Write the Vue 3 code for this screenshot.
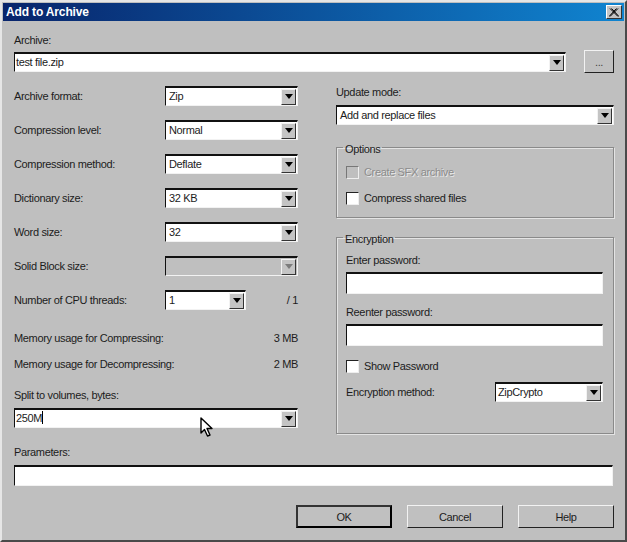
<script setup>
const rows = [
  { label: 'Archive format:', value: 'Zip' },
  { label: 'Compression level:', value: 'Normal' },
  { label: 'Compression method:', value: 'Deflate' },
  { label: 'Dictionary size:', value: '32 KB' },
  { label: 'Word size:', value: '32' },
  { label: 'Solid Block size:', value: '', disabled: true }
]
</script>

<template>
  <div class="window">
    <div class="titlebar">
      <span>Add to Archive</span>
      <button class="close">
        <svg width="10" height="9" viewBox="0 0 10 9"><path d="M1 0.5 L9 8.5 M2.5 0.5 L10 8.5 M9 0.5 L1 8.5 M7.5 0.5 L0 8.5" stroke="#000" fill="none" /></svg>
      </button>
    </div>

    <div class="body">
      <div class="label">Archive:</div>
      <div class="archive-row">
        <div class="combo edit">
          <span class="text">test file.zip</span>
          <span class="drop"><i></i></span>
        </div>
        <button class="btn browse">...</button>
      </div>

      <div class="columns">
        <div class="left">
          <div class="rows">
            <div v-for="row in rows" :key="row.label" class="row">
              <span class="row-label">{{ row.label }}</span>
              <div class="combo wide" :class="{ disabled: row.disabled }">
                <span class="text">{{ row.value }}</span>
                <span class="drop"><i></i></span>
              </div>
            </div>
            <div class="row">
              <span class="row-label">Number of CPU threads:</span>
              <div class="combo cpu">
                <span class="text">1</span>
                <span class="drop"><i></i></span>
              </div>
              <span class="aside">/ 1</span>
            </div>
          </div>

          <div class="mem first"><span>Memory usage for Compressing:</span><span>3 MB</span></div>
          <div class="mem"><span>Memory usage for Decompressing:</span><span>2 MB</span></div>

          <div class="label split-label">Split to volumes, bytes:</div>
          <div class="combo edit split">
            <span class="text">250M<b class="caret"></b></span>
            <span class="drop"><i></i></span>
          </div>
        </div>

        <div class="right">
          <div class="label">Update mode:</div>
          <div class="combo update">
            <span class="text">Add and replace files</span>
            <span class="drop"><i></i></span>
          </div>

          <fieldset class="group options">
            <legend>Options</legend>
            <div class="check off"><span class="box"></span><span>Create SFX archive</span></div>
            <div class="check"><span class="box"></span><span>Compress shared files</span></div>
          </fieldset>

          <fieldset class="group encryption">
            <legend>Encryption</legend>
            <div class="label">Enter password:</div>
            <div class="input"></div>
            <div class="label second">Reenter password:</div>
            <div class="input"></div>
            <div class="check show"><span class="box"></span><span>Show Password</span></div>
            <div class="method">
              <span>Encryption method:</span>
              <div class="combo method-combo">
                <span class="text">ZipCrypto</span>
                <span class="drop"><i></i></span>
              </div>
            </div>
          </fieldset>
        </div>
      </div>

      <div class="label params-label">Parameters:</div>
      <div class="input params"></div>

      <div class="actions">
        <button class="btn default">OK</button>
        <button class="btn">Cancel</button>
        <button class="btn">Help</button>
      </div>
    </div>

    <svg class="cursor" width="15" height="21" viewBox="0 0 15 21">
      <path d="M1 1 L1 16 L4.5 12.5 L7.5 19 L10 18 L7 11.5 L12 11.5 Z" fill="#fff" stroke="#000" stroke-width="1.4" stroke-linejoin="round" />
    </svg>
  </div>
</template>

<style scoped>
.window {
  position: relative;
  width: 627px;
  height: 542px;
  box-sizing: border-box;
  border: 2px solid;
  border-color: #e6e6e6 #4a4a4a #4a4a4a #e6e6e6;
  padding: 1px;
  background: #bfbfbf;
  color: #1c1c1c;
  font: 11px/14px "Liberation Sans", Arial, sans-serif;
  letter-spacing: -0.35px;
  overflow: hidden;
}
.titlebar {
  display: flex;
  align-items: center;
  justify-content: space-between;
  height: 18px;
  padding: 0 2px 0 3px;
  background: linear-gradient(90deg, #08246b, #1084d0);
  color: #fff;
  font-weight: bold;
  font-size: 12px;
  letter-spacing: -0.15px;
}
.close {
  display: flex;
  align-items: center;
  justify-content: center;
  width: 16px;
  height: 14px;
  padding: 0;
  border: 1px solid;
  border-color: #fff #333 #333 #fff;
  background: #c4c4c4;
}
.body { padding: 12px 10px 0 11px; }
.archive-row {
  display: flex;
  align-items: flex-end;
  justify-content: space-between;
  margin-top: 3px;
}
.combo {
  display: flex;
  align-items: center;
  justify-content: space-between;
  box-sizing: border-box;
  height: 20px;
  padding: 0 1px 0 3px;
  background: #fff;
  border: 1px solid;
  border-color: #111 #f2f2f2 #f2f2f2 #111;
  border-top-width: 2px;
  color: #1c1c1c;
}
.combo .text { padding-bottom: 1px; }
.combo.edit { width: 552px; padding-left: 1px; }
.combo.wide { width: 133px; }
.combo.cpu { width: 81px; }
.combo.split { width: 284px; height: 20px; }
.combo.update { width: 278px; margin-top: 6px; }
.combo.method-combo { width: 108px; padding-left: 2px; }
.combo.disabled { background: #bfbfbf; }
.drop {
  display: flex;
  align-items: center;
  justify-content: center;
  box-sizing: border-box;
  width: 15px;
  height: 16px;
  border: 1px solid;
  border-color: #f2f2f2 #333 #333 #f2f2f2;
  background: #c4c4c4;
}
.drop i {
  width: 0;
  height: 0;
  border: 4px solid transparent;
  border-top: 5px solid #000;
  border-bottom: 0;
}
.disabled .drop i { border-top-color: #7c7c7c; }
.btn {
  box-sizing: border-box;
  width: 96px;
  height: 23px;
  padding: 0;
  border: 1px solid;
  border-color: #f2f2f2 #222 #222 #f2f2f2;
  background: #c0c0c0;
  color: #1c1c1c;
  font: inherit;
  letter-spacing: inherit;
}
.btn.browse { width: 30px; margin-bottom: -1px; color: #444; }
.btn.default { border: 2px solid #000; border-color: #333 #000 #000 #333; }
.columns {
  display: flex;
  justify-content: space-between;
  margin-top: 13px;
}
.left { width: 284px; padding-top: 1px; }
.right { width: 278px; }
.rows { display: flex; flex-direction: column; gap: 14px; }
.row { display: flex; align-items: center; height: 20px; }
.row-label { width: 151px; }
.aside { margin-left: auto; }
.mem { display: flex; justify-content: space-between; margin-top: 12px; }
.mem.first { margin-top: 21px; }
.split-label { margin-top: 17px; margin-bottom: 6px; }
.group {
  box-sizing: border-box;
  margin: 0;
  border: 1px solid #8a8a8a;
  box-shadow: 1px 1px 0 #e4e4e4, inset 1px 1px 0 #e4e4e4;
}
.group legend { padding: 4px 2px 0; margin-left: -3px; }
.options {
  height: 80px;
  margin-top: 13px;
  padding: 9px 10px 0 9px;
}
.encryption {
  height: 206px;
  margin-top: 10px;
  padding: 7px 10px 0 9px;
}
.check {
  display: flex;
  align-items: center;
  gap: 5px;
  height: 14px;
}
.check + .check { margin-top: 12px; }
.check.off { color: #8c8c8c; text-shadow: 1px 1px 0 #e8e8e8; }
.box {
  box-sizing: border-box;
  width: 13px;
  height: 13px;
  background: #fff;
  border: 1px solid;
  border-color: #222 #eee #eee #222;
}
.off .box { background: #bfbfbf; border-color: #777 #eee #eee #777; }
.input {
  box-sizing: border-box;
  height: 22px;
  margin-top: 5px;
  background: #fff;
  border: 1px solid;
  border-color: #111 #f2f2f2 #f2f2f2 #111;
  border-top-width: 2px;
}
.label.second { margin-top: 11px; }
.check.show { margin-top: 13px; }
.method {
  display: flex;
  align-items: center;
  justify-content: space-between;
  margin-top: 9px;
}
.params-label { margin-top: 11px; }
.params { height: 21px; margin-top: 6px; width: 599px; }
.actions {
  display: flex;
  justify-content: flex-end;
  gap: 15px;
  margin-top: 19px;
}
.caret {
  display: inline-block;
  width: 1px;
  height: 13px;
  vertical-align: -2px;
  background: #000;
}
.cursor {
  position: absolute;
  left: 198px;
  top: 415px;
}
</style>

<style>
html, body { margin: 0; background: #bfbfbf; }
</style>
